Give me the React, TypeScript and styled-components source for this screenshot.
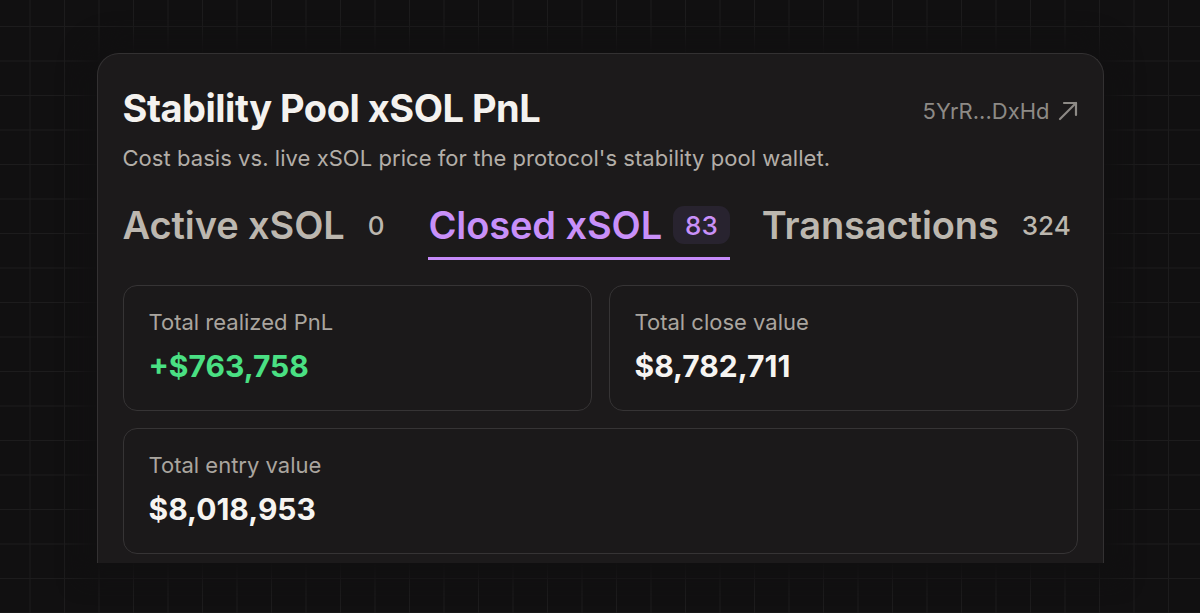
import styled, { createGlobalStyle } from "styled-components";

const GlobalStyle = createGlobalStyle`
  html, body {
    margin: 0;
    padding: 0;
    background: #111011;
  }
  * {
    box-sizing: border-box;
  }
`;

const Page = styled.div`
  width: 1200px;
  height: 613px;
  overflow: hidden;
  display: flex;
  justify-content: center;
  padding-top: 53px;
  font-family: Inter, "Noto Sans", sans-serif;
  background-color: #111011;
  background-image:
    linear-gradient(to right, #1d1c1d 1px, transparent 1px),
    linear-gradient(to bottom, #1d1c1d 1px, transparent 1px);
  background-size: 34.5px 34.5px;
  background-position: 29.5px 26px;
`;

const Card = styled.div`
  width: 1007px;
  height: 510px;
  flex-shrink: 0;
  overflow: hidden;
  background: #1c1a1b;
  border: 1px solid #333132;
  border-bottom: none;
  border-radius: 22px 22px 0 0;
  padding: 30px 25px 0;
  box-shadow: 0 0 22px 16px #111011;
`;

const Header = styled.div`
  display: flex;
  align-items: center;
  justify-content: space-between;
`;

const Title = styled.h1`
  margin: 0;
  font-size: 38px;
  line-height: 48px;
  font-weight: 700;
  letter-spacing: -0.5px;
  color: #f4f2ef;
`;

const Address = styled.a`
  display: flex;
  align-items: center;
  gap: 8px;
  font-size: 22px;
  color: #8d8a86;
  text-decoration: none;
  margin-top: 6px;
`;

const Arrow = styled.svg`
  width: 20px;
  height: 20px;
  fill: none;
  stroke: #8d8a86;
  stroke-width: 2.2;
  stroke-linecap: round;
  stroke-linejoin: round;
`;

const Subtitle = styled.p`
  margin: 12px 0 0;
  font-size: 22px;
  line-height: 28px;
  letter-spacing: 0.05px;
  color: #b3aea8;
`;

const Tabs = styled.div`
  display: flex;
  gap: 32px;
  margin-top: 29px;
  white-space: nowrap;
`;

const Tab = styled.div<{ $active?: boolean }>`
  display: flex;
  flex-shrink: 0;
  align-items: center;
  gap: 11px;
  height: 59px;
  padding-bottom: 8px;
  border-bottom: 3px solid ${p => (p.$active ? "#c58af9" : "transparent")};
`;

const TabLabel = styled.span<{ $active?: boolean }>`
  font-size: 38px;
  font-weight: 600;
  letter-spacing: -0.1px;
  color: ${p => (p.$active ? "#c890f9" : "#bcb7af")};
`;

const Count = styled.span<{ $active?: boolean }>`
  display: inline-flex;
  align-items: center;
  height: 38px;
  padding: 0 12px;
  border-radius: 11px;
  font-size: 26px;
  font-weight: 500;
  color: ${p => (p.$active ? "#c890f9" : "#bcb7af")};
  background: ${p => (p.$active ? "#28232f" : "transparent")};
`;

const Stats = styled.div`
  display: grid;
  grid-template-columns: 1fr 1fr;
  gap: 17px;
  margin-top: 25px;
`;

const Stat = styled.div<{ $wide?: boolean }>`
  grid-column: ${p => (p.$wide ? "1 / span 2" : "auto")};
  height: 126px;
  padding: 22px 25px;
  border: 1px solid #363435;
  border-radius: 14px;
  background: #1b191a;
`;

const StatLabel = styled.div`
  font-size: 22px;
  line-height: 28px;
  color: #aaa59f;
`;

const StatValue = styled.div<{ $positive?: boolean }>`
  margin-top: 11px;
  font-size: 30px;
  line-height: 38px;
  font-weight: 700;
  color: ${p => (p.$positive ? "#4ae083" : "#f6f4f1")};
`;

const tabs = [
  { label: "Active xSOL", count: 0 },
  { label: "Closed xSOL", count: 83, active: true },
  { label: "Transactions", count: 324 },
];

const stats = [
  { label: "Total realized PnL", value: "+$763,758", positive: true },
  { label: "Total close value", value: "$8,782,711" },
  { label: "Total entry value", value: "$8,018,953", wide: true },
];

export default function App() {
  return (
    <>
      <GlobalStyle />
      <Page>
        <Card>
          <Header>
            <Title>Stability Pool xSOL PnL</Title>
            <Address href="#">
              5YrR...DxHd
              <Arrow viewBox="0 0 20 20">
                <path d="M2 18 L18 2" />
                <path d="M6 2 H18 V14" />
              </Arrow>
            </Address>
          </Header>
          <Subtitle>
            Cost basis vs. live xSOL price for the protocol's stability pool wallet.
          </Subtitle>
          <Tabs>
            {tabs.map(t => (
              <Tab key={t.label} $active={t.active}>
                <TabLabel $active={t.active}>{t.label}</TabLabel>
                <Count $active={t.active}>{t.count}</Count>
              </Tab>
            ))}
          </Tabs>
          <Stats>
            {stats.map(s => (
              <Stat key={s.label} $wide={s.wide}>
                <StatLabel>{s.label}</StatLabel>
                <StatValue $positive={s.positive}>{s.value}</StatValue>
              </Stat>
            ))}
          </Stats>
        </Card>
      </Page>
    </>
  );
}
